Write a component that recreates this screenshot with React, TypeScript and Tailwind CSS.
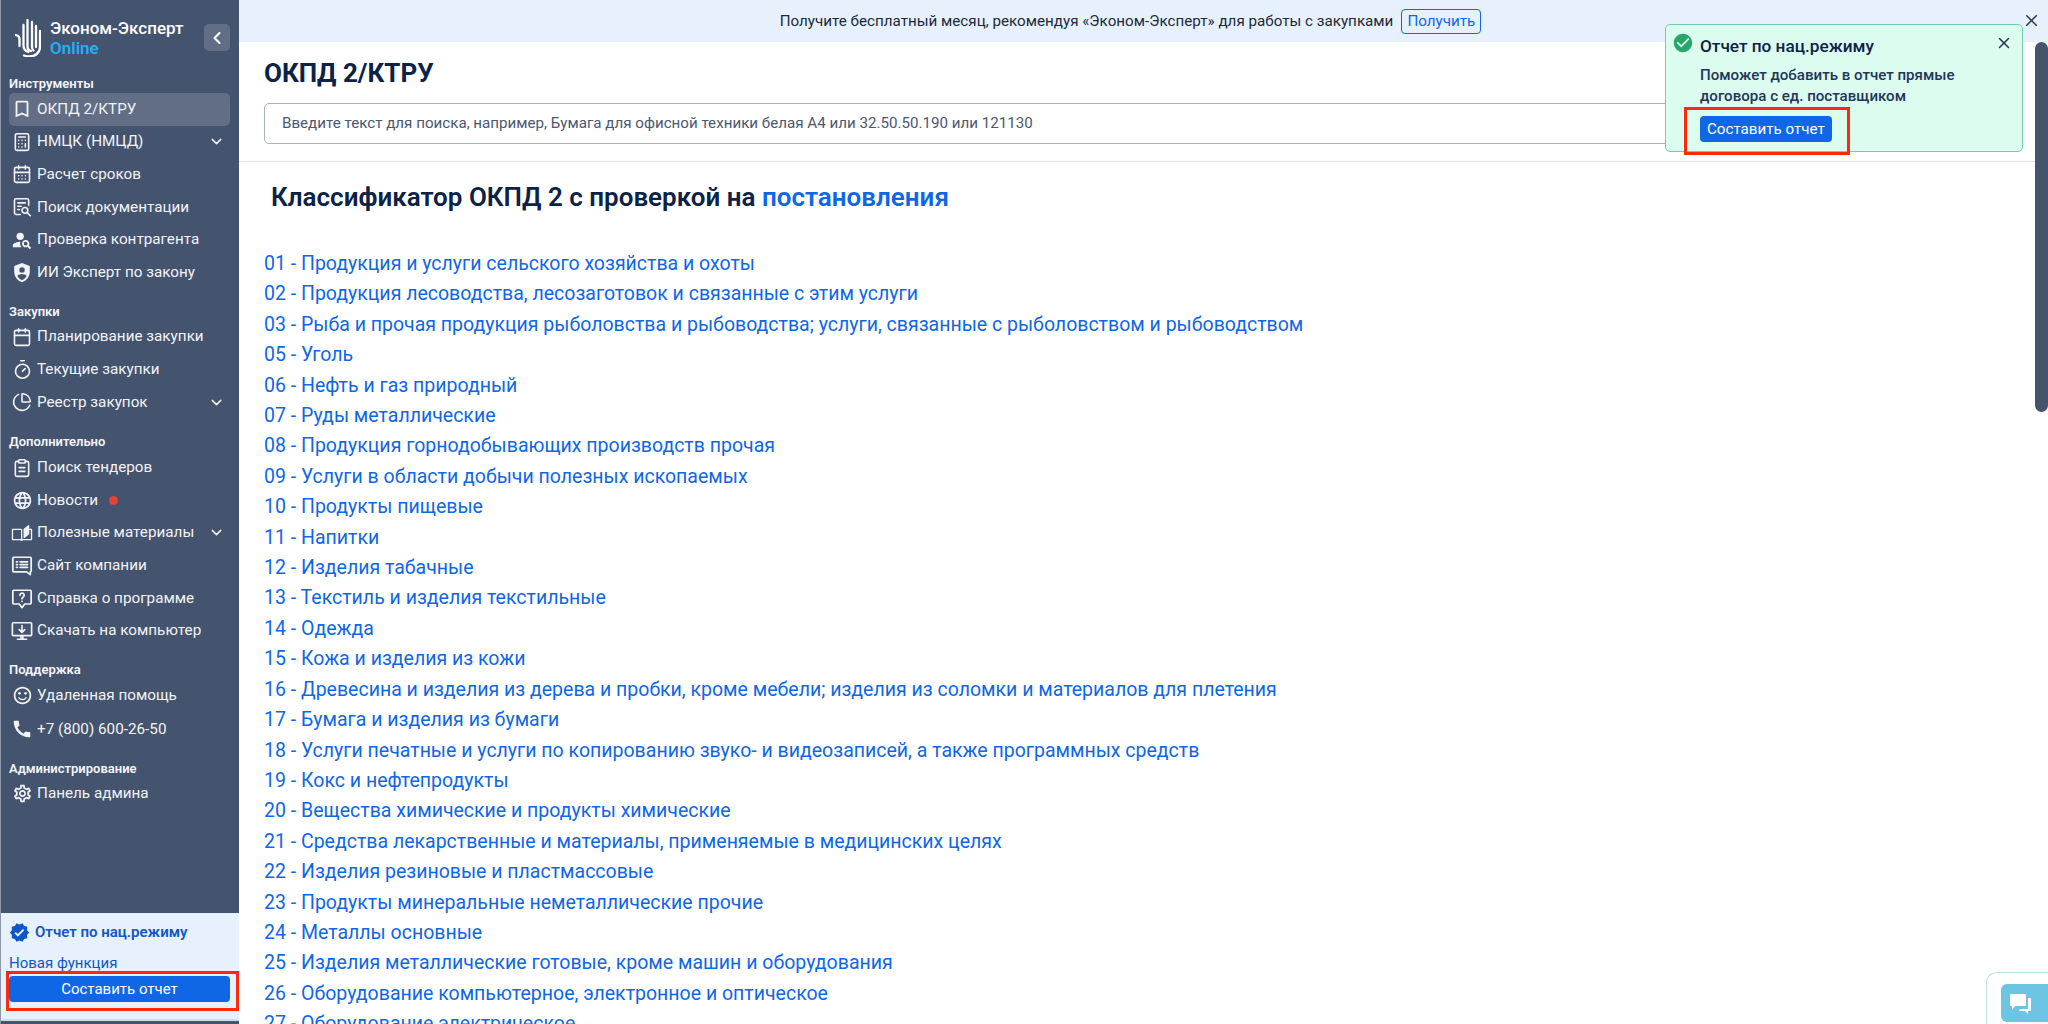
import type { ReactNode } from "react";
import { Calculator, Calendar, CalendarDays, ChartPie, ChevronDown, ChevronLeft, Timer, X } from "lucide-react";
import {
  MdCall,
  MdCheckCircle,
  MdOutlineBookmarkBorder,
  MdOutlineLanguage,
  MdOutlineSentimentSatisfied,
  MdOutlineSettings,
  MdPersonSearch,
  MdVerified,
} from "react-icons/md";

const classes = [
  "01 - Продукция и услуги сельского хозяйства и охоты",
  "02 - Продукция лесоводства, лесозаготовок и связанные с этим услуги",
  "03 - Рыба и прочая продукция рыболовства и рыбоводства; услуги, связанные с рыболовством и рыбоводством",
  "05 - Уголь",
  "06 - Нефть и газ природный",
  "07 - Руды металлические",
  "08 - Продукция горнодобывающих производств прочая",
  "09 - Услуги в области добычи полезных ископаемых",
  "10 - Продукты пищевые",
  "11 - Напитки",
  "12 - Изделия табачные",
  "13 - Текстиль и изделия текстильные",
  "14 - Одежда",
  "15 - Кожа и изделия из кожи",
  "16 - Древесина и изделия из дерева и пробки, кроме мебели; изделия из соломки и материалов для плетения",
  "17 - Бумага и изделия из бумаги",
  "18 - Услуги печатные и услуги по копированию звуко- и видеозаписей, а также программных средств",
  "19 - Кокс и нефтепродукты",
  "20 - Вещества химические и продукты химические",
  "21 - Средства лекарственные и материалы, применяемые в медицинских целях",
  "22 - Изделия резиновые и пластмассовые",
  "23 - Продукты минеральные неметаллические прочие",
  "24 - Металлы основные",
  "25 - Изделия металлические готовые, кроме машин и оборудования",
  "26 - Оборудование компьютерное, электронное и оптическое",
  "27 - Оборудование электрическое",
];

function Stroke({ children, className }: { children: ReactNode; className?: string }) {
  return (
    <svg viewBox="0 0 24 24" className={className ?? "h-[20px] w-[20px]"} fill="none" stroke="currentColor" strokeWidth="1.900" strokeLinecap="round" strokeLinejoin="round">
      {children}
    </svg>
  );
}

function ShieldPerson() {
  return (
    <svg viewBox="0 0 24 24" className="h-[23px] w-[23px]" fill="currentColor">
      <path d="M12 1.500 3.500 5v6.100c0 5.200 3.600 10 8.500 11.400 4.900-1.400 8.500-6.200 8.500-11.400V5L12 1.500Zm0 4.700a3 3 0 1 1 0 6 3 3 0 0 1 0-6Zm0 14.100c-2.200-.8-4-2.400-5.100-4.500 1.300-1.300 3.200-2.100 5.100-2.100s3.800.8 5.100 2.100c-1.100 2.100-2.900 3.700-5.100 4.500Z" />
    </svg>
  );
}

function DocSearch() {
  return (
    <Stroke>
      <path d="M10 21H5a2 2 0 0 1-2-2V4a2 2 0 0 1 2-2h13a2 2 0 0 1 2 2v6" />
      <path d="M7 7h9M7 11h4M7 15h2" />
      <circle cx="15.500" cy="16" r="3.500" />
      <path d="m18.500 19 3.500 3.500" />
    </Stroke>
  );
}

function ClipboardLines() {
  return (
    <Stroke>
      <path d="M8 4H6a2 2 0 0 0-2 2v14a2 2 0 0 0 2 2h12a2 2 0 0 0 2-2V6a2 2 0 0 0-2-2h-2" />
      <rect x="8" y="2" width="8" height="4" rx="1" />
      <path d="M8.500 11.500h7M8.500 16h7" />
    </Stroke>
  );
}

function BookMark() {
  return (
    <svg viewBox="0 0 30 24" className="h-[24px] w-[28px] max-w-none" fill="none" stroke="currentColor" strokeWidth="1.800" strokeLinejoin="round">
      <path d="M14 7H2v14h10.500c.8 0 1.500.4 2 1 .5-.6 1.200-1 2-1H28V7h-4" />
      <path d="M14.500 22V7" />
      <path d="M18 18V7l6-5v11l-6 5Z" fill="currentColor" />
    </svg>
  );
}

function BubbleList() {
  return (
    <Stroke className="h-[23px] w-[23px]">
      <path d="M3 3h18a1 1 0 0 1 1 1v14a1 1 0 0 1-1 1v3l-4-3H3a1 1 0 0 1-1-1V4a1 1 0 0 1 1-1Z" />
      <path d="M6 8h1M6 11h1M6 14h1M10 8h8M10 11h8M10 14h8" />
    </Stroke>
  );
}

function BubbleHelp() {
  return (
    <Stroke className="h-[23px] w-[23px]">
      <path d="M3 3h18a1 1 0 0 1 1 1v13a1 1 0 0 1-1 1h-6l-3 4-3-4H3a1 1 0 0 1-1-1V4a1 1 0 0 1 1-1Z" />
      <path d="M9.800 8.500a2.300 2.300 0 1 1 3.400 2c-.8.500-1.200 1-1.200 1.800M12 15v.1" />
    </Stroke>
  );
}

function MonitorDown() {
  return (
    <svg viewBox="0 0 24 24" className="h-[24px] w-[25px] max-w-none" fill="none" stroke="currentColor" strokeWidth="1.800" strokeLinecap="round" strokeLinejoin="round">
      <rect x="1.500" y="3" width="21" height="14" rx="1" />
      <path d="M12 6v7M9 10.500l3 3 3-3" />
      <path d="M11 17v3M13 17v3M7 21h10" />
    </svg>
  );
}

function NavRow({ icon, label, active, arrow, dot }: { icon: ReactNode; label: string; active?: boolean; arrow?: boolean; dot?: boolean }) {
  return (
    <div className={`flex h-[32.6px] items-center rounded-[5px] pl-[2px] pr-[5px] text-[15.250px] text-[#f1f3f6] ${active ? "bg-[#626e86]" : ""}`}>
      <span className="flex h-[20px] w-[22px] shrink-0 items-center justify-center text-[21px]">{icon}</span>
      <span className="ml-[4px] whitespace-nowrap">{label}</span>
      {dot && <span className="ml-[11px] h-[9px] w-[9px] rounded-full bg-[#e5403a]" />}
      {arrow && <ChevronDown className="ml-auto h-[17px] w-[17px]" strokeWidth={2} />}
    </div>
  );
}

function SectionLabel({ children, className }: { children: ReactNode; className?: string }) {
  return <div className={`pl-[8px] text-[13px] font-semibold leading-[18px] text-[#f4f5f8] ${className ?? ""}`}>{children}</div>;
}

function Sidebar() {
  return (
    <aside className="flex h-full w-[239px] shrink-0 flex-col border-l border-l-[#8d97a8] bg-[#45546e]">
      <div className="flex h-[75px] items-start pl-[14px] pr-[9px] pt-[19px]">
        <svg viewBox="0 0 26 38" className="h-[38px] w-[26px] text-white" fill="none" stroke="currentColor" strokeWidth="2.300" strokeLinecap="round">
          <path d="M.8 16C3 16.500 4.500 18 4.500 20v7" />
          <path d="M8.500 6v21c0 3 2 5 5 6" />
          <path d="M12.500 1v27c0 2 1.500 3.500 3.500 4" />
          <path d="M17 3v25c0 1.500.5 2.500 1.500 3.500" />
          <path d="M21 7v21" />
          <path d="M25 12v16c0 6-5 9.500-11 9.500-2 0-3.500-.5-5-1" />
        </svg>
        <div className="ml-[9px] text-[17px] font-medium leading-[19.500px] text-white">
          <div>Эконом-Эксперт</div>
          <div className="font-semibold text-[#1cb3f5]">Online</div>
        </div>
        <button className="ml-auto mt-[5px] flex h-[27px] w-[26px] items-center justify-center rounded-[5px] bg-[#626e86] text-white">
          <ChevronLeft className="h-[20px] w-[20px]" strokeWidth={2.500} />
        </button>
      </div>

      <SectionLabel>Инструменты</SectionLabel>
      <nav className="pl-[8px] pr-[9px]">
        <NavRow icon={<MdOutlineBookmarkBorder className="h-[24px] w-[24px]" />} label="ОКПД 2/КТРУ" active />
        <NavRow icon={<Calculator className="h-[20px] w-[20px]" strokeWidth={1.900} />} label="НМЦК (НМЦД)" arrow />
        <NavRow icon={<CalendarDays className="h-[20px] w-[20px]" strokeWidth={1.900} />} label="Расчет сроков" />
        <NavRow icon={<DocSearch />} label="Поиск документации" />
        <NavRow icon={<MdPersonSearch className="h-[22px] w-[22px]" />} label="Проверка контрагента" />
        <NavRow icon={<ShieldPerson />} label="ИИ Эксперт по закону" />
      </nav>

      <SectionLabel className="mt-[14px]">Закупки</SectionLabel>
      <nav className="pl-[8px] pr-[9px]">
        <NavRow icon={<Calendar className="h-[20px] w-[20px]" strokeWidth={1.900} />} label="Планирование закупки" />
        <NavRow icon={<Timer className="h-[21px] w-[21px]" strokeWidth={1.900} />} label="Текущие закупки" />
        <NavRow icon={<ChartPie className="h-[20px] w-[20px]" strokeWidth={1.900} />} label="Реестр закупок" arrow />
      </nav>

      <SectionLabel className="mt-[15px]">Дополнительно</SectionLabel>
      <nav className="pl-[8px] pr-[9px]">
        <NavRow icon={<ClipboardLines />} label="Поиск тендеров" />
        <NavRow icon={<MdOutlineLanguage className="h-[21px] w-[21px]" />} label="Новости" dot />
        <NavRow icon={<BookMark />} label="Полезные материалы" arrow />
        <NavRow icon={<BubbleList />} label="Сайт компании" />
        <NavRow icon={<BubbleHelp />} label="Справка о программе" />
        <NavRow icon={<MonitorDown />} label="Скачать на компьютер" />
      </nav>

      <SectionLabel className="mt-[14px]">Поддержка</SectionLabel>
      <nav className="pl-[8px] pr-[9px]">
        <NavRow icon={<MdOutlineSentimentSatisfied className="h-[21px] w-[21px]" />} label="Удаленная помощь" />
        <div className="mt-[1.500px]">
          <NavRow icon={<MdCall className="h-[22px] w-[22px]" />} label="+7 (800) 600-26-50" />
        </div>
      </nav>

      <SectionLabel className="mt-[14px]">Администрирование</SectionLabel>
      <nav className="pl-[8px] pr-[9px]">
        <NavRow icon={<MdOutlineSettings className="h-[21px] w-[21px]" />} label="Панель админа" />
      </nav>

      <div className="mt-auto mb-[3px] h-[108px] border-b-2 border-[#d5dbe5] bg-[#e7f1fe] pl-[8px] pr-[9px] pt-[9px]">
        <div className="flex h-[21px] items-center text-[15px] font-semibold text-[#0f57c4]">
          <MdVerified className="h-[21px] w-[21px] text-[#0f57c4]" />
          <span className="ml-[5px]">Отчет по нац.режиму</span>
        </div>
        <div className="mt-[12px] text-[15px] leading-[16px] text-[#0f57c4]">Новая функция</div>
        <div className="relative mt-[5px]">
          <button className="flex h-[26px] w-full items-center justify-center rounded-[4px] bg-[#0f67e6] text-[15px] text-white">Составить отчет</button>
          <div className="absolute -left-[3px] -right-[9px] -top-[5px] h-[40px] border-[3px] border-[#fb2a0c]" />
        </div>
      </div>
    </aside>
  );
}

export default function App() {
  return (
    <div className="relative flex h-screen w-full overflow-hidden bg-white font-['Roboto',sans-serif] text-[#0c2246]">
      <Sidebar />

      <div className="flex min-w-0 flex-1 flex-col">
        <div className="relative flex h-[42px] shrink-0 items-center justify-center bg-[#e7f1fe] pr-[26px] text-[15.200px] text-[#1d2939]">
          <span>Получите бесплатный месяц, рекомендуя «Эконом-Эксперт» для работы с закупками</span>
          <button className="ml-[8px] h-[25px] rounded-[4px] border border-[#0f67e6] px-[5px] text-[15.200px] text-[#0f67e6]">Получить</button>
          <X className="absolute right-[7px] top-[11px] h-[19px] w-[19px] text-[#2b3850]" strokeWidth={2} />
        </div>

        <div className="flex min-h-0 flex-1">
          <main className="min-w-0 flex-1 overflow-hidden">
            <div className="h-[120px] border-b border-[#e0e3e8] pl-[25px] pr-[20px]">
              <h1 className="pt-[16px] text-[26px] font-bold leading-[30px] text-[#0c2246]">ОКПД 2/КТРУ</h1>
              <div className="mt-[15px] flex h-[41px] items-center rounded-[5px] border border-[#a9b0bf] pl-[17px] text-[15.150px] text-[#4a5872]">
                Введите текст для поиска, например, Бумага для офисной техники белая А4 или 32.50.50.190 или 121130
              </div>
            </div>
            <div className="pl-[25px]">
              <h2 className="mt-[19px] pl-[7px] text-[26px] font-semibold leading-[32px] text-[#0c2246]">
                Классификатор ОКПД 2 с проверкой на <span className="text-[#0f67e6]">постановления</span>
              </h2>
              <ul className="mt-[36px] text-[19.500px] leading-[30.400px] text-[#0f67e6]">
                {classes.map((item) => (
                  <li key={item}>{item}</li>
                ))}
              </ul>
            </div>
          </main>
          <div className="w-[13px] shrink-0 bg-white">
            <div className="h-[370px] w-[13px] rounded-full bg-[#45546e]" />
          </div>
        </div>
      </div>

      <div className="absolute left-[1665px] top-[24px] h-[128px] w-[358px] rounded-[5px] border border-[#6fcfa8] bg-[#dbfcee] pl-[34px] pt-[11px]">
        <MdCheckCircle className="absolute left-[6px] top-[7px] h-[22px] w-[22px] text-[#27a66b]" />
        <X className="absolute right-[9px] top-[9px] h-[18px] w-[18px] text-[#26344b]" strokeWidth={2} />
        <div className="text-[17.200px] font-medium leading-[20px] text-[#0c2246]">Отчет по нац.режиму</div>
        <div className="mt-[9px] text-[15.100px] font-medium leading-[21px] text-[#23365a]">
          Поможет добавить в отчет прямые
          <br />
          договора с ед. поставщиком
        </div>
        <div className="relative mt-[9px] w-fit">
          <button className="h-[26px] rounded-[4px] bg-[#0f67e6] px-[7px] text-[15.150px] text-white">Составить отчет</button>
          <div className="absolute -left-[16px] -right-[18px] -top-[9px] h-[48px] border-[3px] border-[#fb2a0c]" />
        </div>
      </div>

      <div className="absolute right-0 bottom-0 h-[52px] w-[62px] rounded-tl-[10px] border-l border-t border-[#bfe0ee] bg-white pl-[14px] pt-[11px]">
        <div className="flex h-[38px] items-start rounded-l-[6px] bg-[#6cc5e3] pl-[8px] pt-[8px]">
          <svg viewBox="0 0 24 24" className="h-[24px] w-[24px] text-white" fill="currentColor">
            <path d="M2 2h14a1 1 0 0 1 1 1v10a1 1 0 0 1-1 1H6l-3 4v-4H2a1 1 0 0 1-1-1V3a1 1 0 0 1 1-1Z" />
            <path d="M19 6h2a1 1 0 0 1 1 1v11a1 1 0 0 1-1 1h-2v3l-3-3h-6l1-2h7a1 1 0 0 0 1-1V6Z" />
          </svg>
        </div>
      </div>
    </div>
  );
}
